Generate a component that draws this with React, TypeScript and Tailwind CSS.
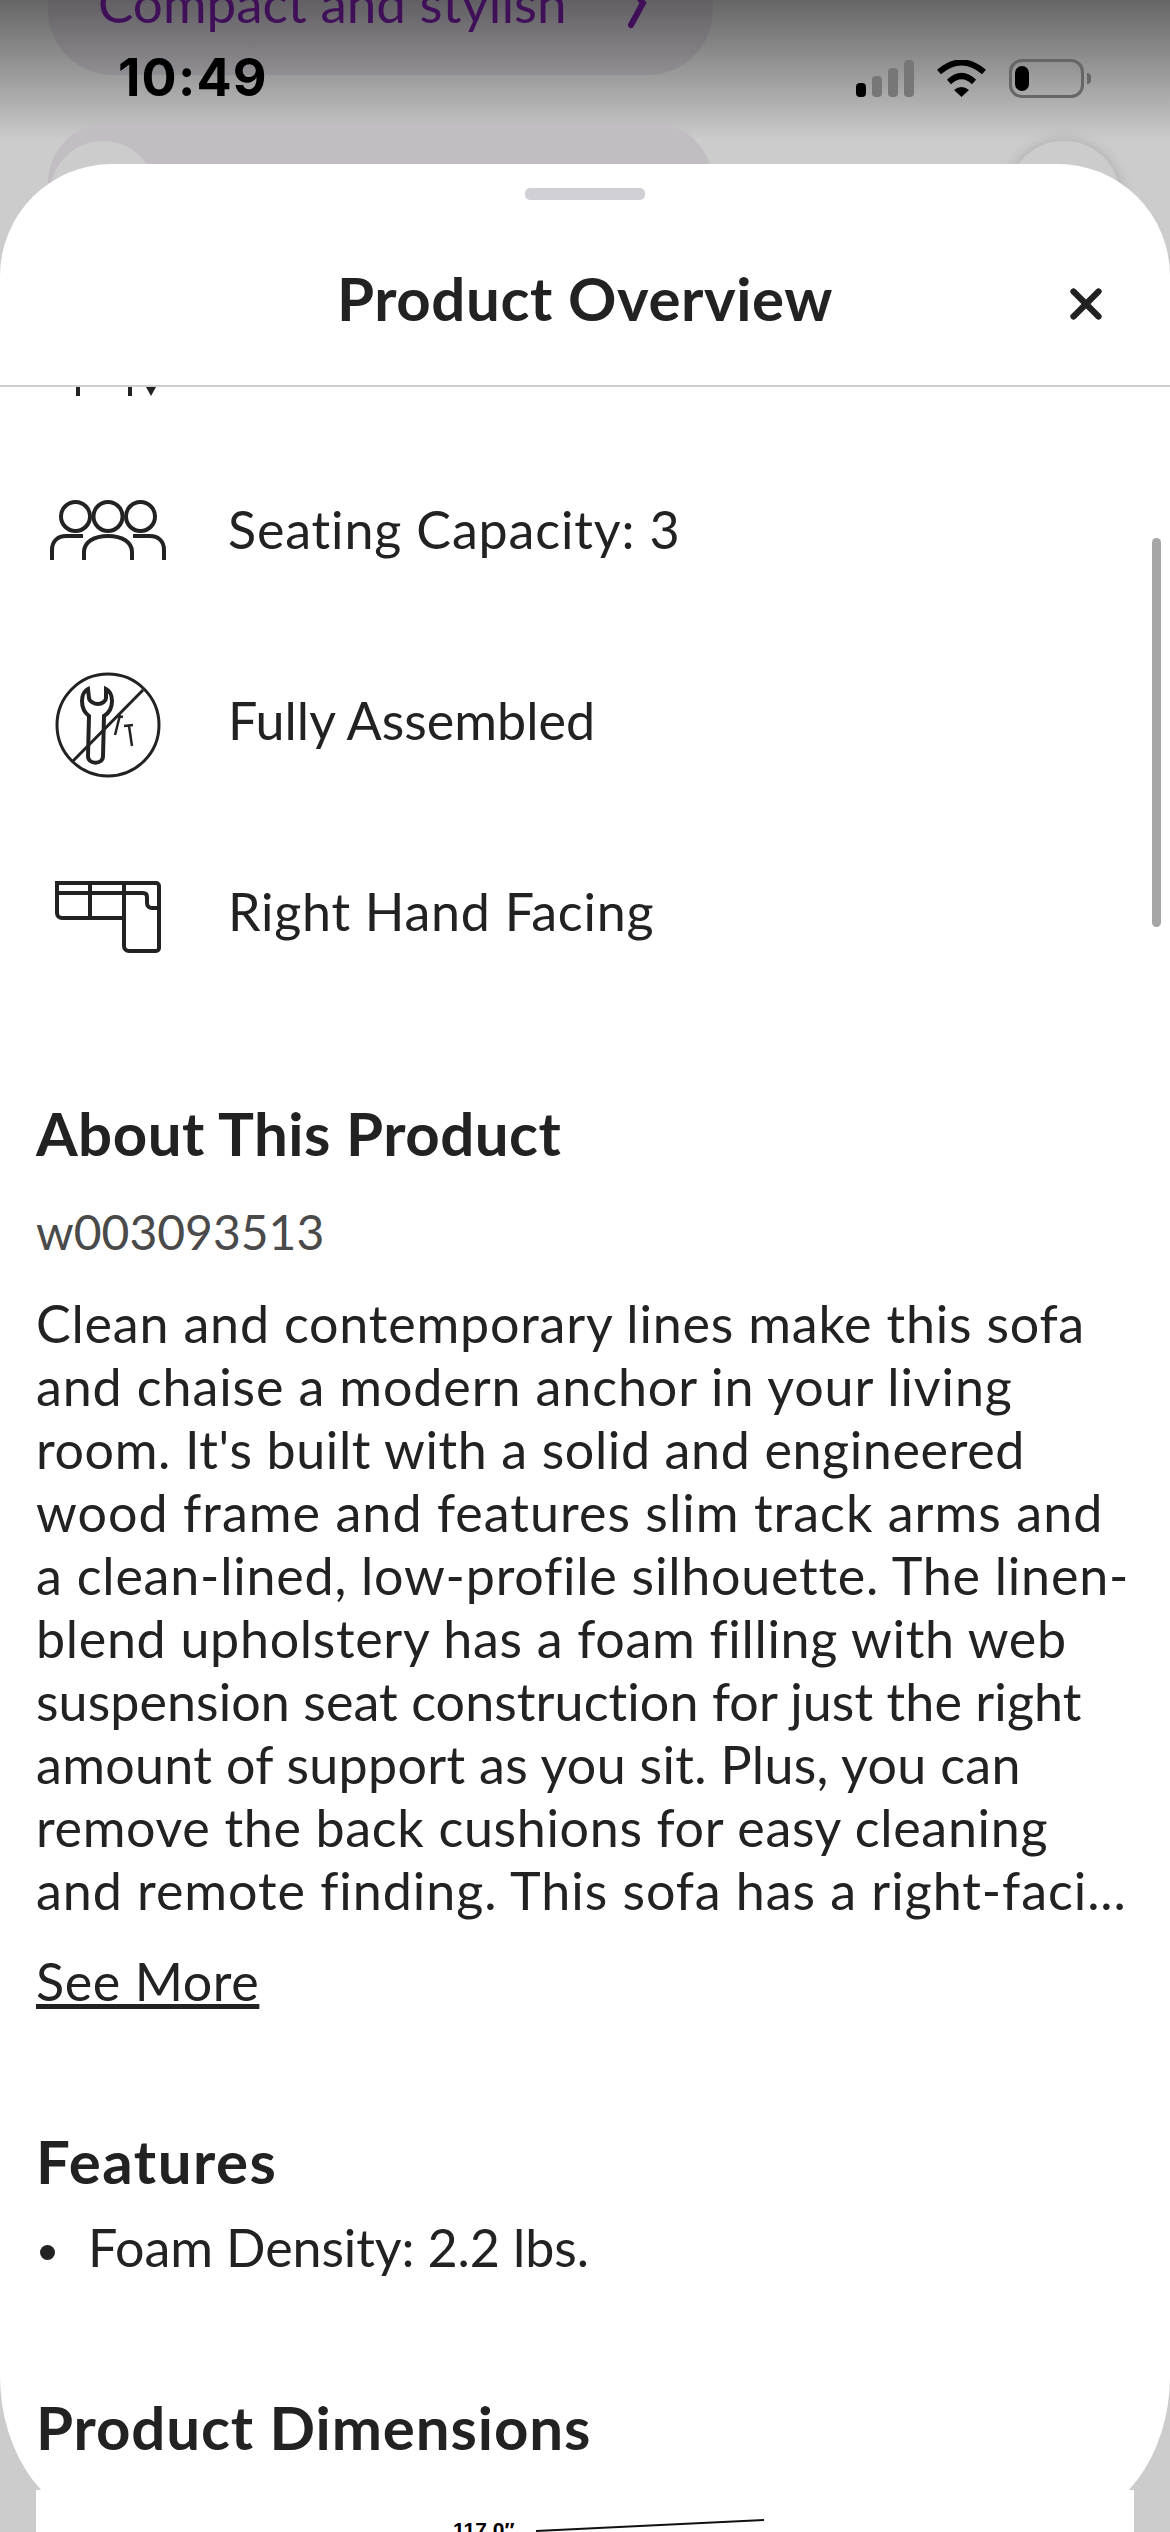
import { X } from "lucide-react";

const specs = [
  { label: "Seating Capacity: 3", icon: <PeopleIcon />, text: "tracking-[0.85px]", iconClass: "mt-[3px]" },
  { label: "Fully Assembled", icon: <NoToolsIcon />, text: "tracking-[0.05px]", iconClass: "mt-[9px]" },
  { label: "Right Hand Facing", icon: <SectionalIcon />, text: "tracking-[0.75px]", iconClass: "mt-[11px]" },
];

// line breaks and widths follow the original copy block
const aboutLines = [
  { text: "Clean and contemporary lines make this sofa", fit: "tracking-[0.8px]" },
  { text: "and chaise a modern anchor in your living", fit: "tracking-[0.88px]" },
  { text: "room. It's built with a solid and engineered", fit: "tracking-[0.62px]" },
  { text: "wood frame and features slim track arms and", fit: "tracking-[1.04px]" },
  { text: "a clean-lined, low-profile silhouette. The linen-", fit: "tracking-[0.78px]" },
  { text: "blend upholstery has a foam filling with web", fit: "tracking-[0.69px]" },
  { text: "suspension seat construction for just the right", fit: "tracking-[0.08px]" },
  { text: "amount of support as you sit. Plus, you can", fit: "tracking-[0.32px]" },
  { text: "remove the back cushions for easy cleaning", fit: "tracking-[0.67px]" },
  { text: "and remote finding. This sofa has a right-faci...", fit: "tracking-[0.95px]" },
];

function PeopleIcon() {
  return (
    <svg width="118" height="62" viewBox="0 0 118 62" fill="none" stroke="#222" strokeWidth="4">
      <circle cx="26.5" cy="16.5" r="14.5" />
      <circle cx="59" cy="16.5" r="14.5" />
      <circle cx="91.5" cy="16.5" r="14.5" />
      <path d="M3 60V50c0-9 6-14 14-14h17" />
      <path d="M35 60V52c0-10 10-16 24-16s24 6 24 16v8" />
      <path d="M84 36h17c8 0 14 5 14 14v10" />
    </svg>
  );
}

function NoToolsIcon() {
  return (
    <svg width="106" height="106" viewBox="0 0 106 106" fill="none" stroke="#222">
      <circle cx="53" cy="53" r="51" strokeWidth="3" />
      <path d="M17 90L88 18" strokeWidth="3" />
      <path
        d="M33 17c-4 2-6 7-6 12 0 7 3 12 7 15l-1 40c0 9 15 9 15 0l1-40c5-3 8-8 8-15 0-5-2-10-6-12v9c0 3-4 6-8 6s-9-3-9-6z"
        strokeWidth="4"
      />
      <path d="M60 63l5-20M62 44l6 1M77 74l-3-20M69 54l9-1" strokeWidth="2.5" />
    </svg>
  );
}

function SectionalIcon() {
  return (
    <svg width="106" height="72" viewBox="0 0 106 72" fill="none" stroke="#222" strokeWidth="4">
      <path d="M2 2h99a3 3 0 013 3v62a3 3 0 01-3 3H74a5 5 0 01-5-5V37H7a5 5 0 01-5-5z" />
      <path d="M2 12h86c3 0 4 2 4 4v6c0 3 2 5 5 5h7" />
      <path d="M35 2v35M69 2v35" />
    </svg>
  );
}

function StatusBar() {
  return (
    <div className="flex h-[38px] items-center justify-between pr-[79px] pl-[118px]">
      <span className="font-['Inter',sans-serif] text-[52px] leading-none font-bold tracking-[1.2px] text-black">
        10:49
      </span>
      <div className="flex items-center gap-[22px]">
        <svg width="58" height="37" viewBox="0 0 58 37">
          <rect x="0" y="23" width="10" height="14" rx="4" fill="#000" />
          <rect x="16" y="16" width="10" height="21" rx="4" fill="#777" />
          <rect x="32" y="8" width="10" height="29" rx="4" fill="#777" />
          <rect x="48" y="0" width="10" height="37" rx="4" fill="#777" />
        </svg>
        <svg width="51" height="37" viewBox="0 0 51 37" fill="none" stroke="#000" strokeWidth="6">
          <path d="M3 12Q25.5-7 48 12" />
          <path d="M13 22Q25.5 10 38 22" />
          <path d="M18 30Q25.5 24 33 30L25.5 37z" fill="#000" stroke="none" />
        </svg>
        <div className="flex items-center">
          <div className="flex h-[39px] w-[75px] items-center rounded-[13px] border-[3px] border-[#666666] pl-[3px]">
            <div className="h-[25px] w-[14px] rounded-[7px] bg-black" />
          </div>
          <div className="ml-[3px] h-[11px] w-[4px] rounded-r-full bg-[#666666]" />
        </div>
      </div>
    </div>
  );
}

export default function App() {
  return (
    <div className="relative h-[2532px] w-[1170px] overflow-hidden bg-[#cccccc] font-['Lato',sans-serif] [font-variant-ligatures:none]">
      {/* dimmed page behind the sheet */}
      <div className="h-[140px] bg-gradient-to-b from-[#666666] to-[#cccccc]" />
      <div className="absolute top-0 left-[48px] h-[75px] w-[665px] rounded-b-[65px] bg-[#3c2c50]/10">
        <div className="-mt-[28px] flex items-center pl-[50px] text-[53px] leading-[60px] text-[#3f1058]">
          Compact and stylish
          <svg className="mt-[1px] ml-[58px]" width="22" height="60" viewBox="0 0 22 60" fill="none" stroke="#3f1058" strokeWidth="6" strokeLinecap="round">
            <path d="M6 14l12 16-12 22" />
          </svg>
        </div>
      </div>
      <div className="absolute top-[123px] left-[48px] h-[60px] w-[665px] rounded-t-[65px] bg-[#c2bdc2]" />
      <div className="absolute top-[141px] left-[50px] h-[106px] w-[106px] rounded-full bg-[#cccccc]" />
      <div className="absolute top-[141px] left-[1008px] h-[110px] w-[112px] rounded-full bg-[#cccccc] shadow-[0_0_14px_rgba(0,0,0,0.18)]" />
      <div className="absolute top-[59px] left-0 w-full">
        <StatusBar />
      </div>

      {/* bottom sheet */}
      <div className="absolute top-[164px] left-0 h-[2358px] w-full rounded-t-[112px] rounded-b-[110px_146px] bg-white" />
      <div className="absolute top-[2490px] left-[36px] h-[42px] w-[1098px] overflow-hidden bg-white">
        <span className="absolute top-[28px] left-[417px] font-['Liberation_Sans',sans-serif] text-[21px] leading-[24px] font-bold text-black">
          117.0″
        </span>
        <svg className="absolute top-[28px] left-[500px]" width="230" height="14" viewBox="0 0 230 14" fill="none" stroke="#111" strokeWidth="2">
          <path d="M0 13L228 2" />
        </svg>
      </div>

      <div className="absolute top-[164px] left-0 w-full">
        <div className="flex h-[223px] flex-col items-center border-b-[2px] border-[#cfcfcf]">
          <div className="mt-[24px] h-[12px] w-[120px] rounded-[5px] bg-[#d0d0d6]" />
          <h1 className="mt-[63px] text-[60px] leading-[70px] font-bold tracking-[0.6px] text-[#222222]">Product Overview</h1>
          <X className="absolute top-[115px] left-[1061px] text-[#222222]" size={50} strokeWidth={3} />
        </div>

        <div className="px-[36px] text-[#222222]">
          {/* bottom of the row scrolled away under the header */}
          <svg className="block" width="130" height="9" viewBox="0 0 130 9" fill="#222">
            <rect x="40" y="0" width="4" height="9" />
            <rect x="92" y="0" width="4" height="9" />
            <path d="M110 0h10l-5 9z" />
          </svg>

          <div className="flex flex-col gap-[99px] pt-[87px]">
            {specs.map((spec) => (
              <div key={spec.label} className="flex h-[92px] items-center">
                <div className={`flex w-[144px] justify-center ${spec.iconClass}`}>{spec.icon}</div>
                <span className={`pl-[48px] text-[52px] leading-[60px] ${spec.text}`}>{spec.label}</span>
              </div>
            ))}
          </div>

          <h2 className="mt-[141px] text-[60px] leading-[70px] font-bold tracking-[0.5px]">About This Product</h2>
          <p className="mt-[34px] text-[48px] leading-[60px] text-[#4a4a4a]">w003093513</p>
          <div className="mt-[30px] text-[52px] leading-[63px] whitespace-nowrap">
            {aboutLines.map((line) => (
              <p key={line.text} className={line.fit}>{line.text}</p>
            ))}
          </div>
          <a className="mt-[28px] block text-[52px] leading-[63px] tracking-[0.6px] underline">See More</a>

          <h2 className="mt-[113px] text-[60px] leading-[70px] font-bold tracking-[1.5px]">Features</h2>
          <div className="mt-[21px] flex items-center text-[52px] leading-[60px] tracking-[-0.1px]">
            <span className="mt-[10px] mr-[33px] ml-[4px] h-[15px] w-[15px] rounded-full bg-[#222222]" />
            Foam Density: 2.2 lbs.
          </div>

          <h2 className="mt-[115px] text-[60px] leading-[70px] font-bold tracking-[0.9px]">Product Dimensions</h2>
        </div>
      </div>

      {/* scroll indicator */}
      <div className="absolute top-[538px] left-[1152px] h-[389px] w-[9px] rounded-full bg-[#a6a6a6]" />
    </div>
  );
}
